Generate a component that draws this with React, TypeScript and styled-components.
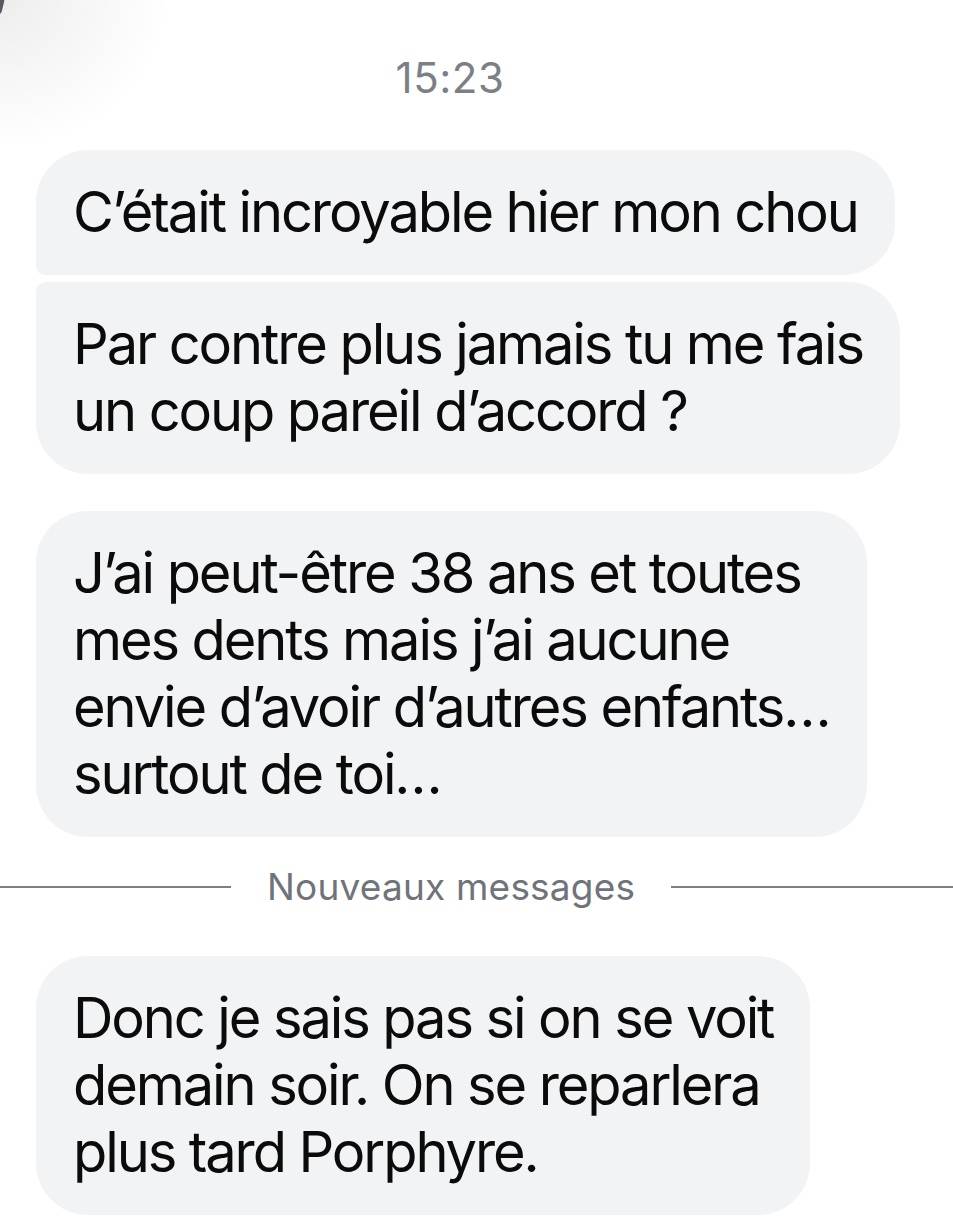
import { styled, createGlobalStyle } from "styled-components";

const GlobalStyle = createGlobalStyle`
  html, body {
    margin: 0;
    padding: 0;
    background: #ffffff;
  }
  body {
    font-family: Inter, "Noto Sans", "Liberation Sans", sans-serif;
    -webkit-font-smoothing: antialiased;
  }
`;

const Screen = styled.div`
  position: relative;
  width: 953px;
  height: 1224px;
  overflow: hidden;
  background:
    radial-gradient(ellipse 170px 150px at 0 0, rgba(0, 0, 0, 0.07), rgba(0, 0, 0, 0) 100%),
    #ffffff;
  padding-top: 54px;
  box-sizing: border-box;
`;

const CornerMark = styled.div`
  position: absolute;
  top: -2px;
  left: -3px;
  width: 6px;
  height: 16px;
  border-radius: 3px;
  background: #555a60;
  transform: rotate(14deg);
`;

const Timestamp = styled.div`
  text-align: center;
  padding-right: 53px;
  font-size: 42px;
  line-height: 48px;
  letter-spacing: 0.5px;
  color: #7b7f86;
  margin-bottom: 48px;
`;

const Thread = styled.div`
  display: flex;
  flex-direction: column;
  align-items: flex-start;
  padding-left: 36px;
`;

type Corner = "top" | "bottom" | "none";

const Bubble = styled.div<{ $tight: Corner; $gap: number }>`
  background: #f2f3f5;
  color: #0b0b0c;
  font-size: 56px;
  line-height: 67px;
  letter-spacing: -2.1px;
  padding: 29px 37px;
  white-space: nowrap;
  border-radius: 52px;
  border-top-left-radius: ${(p) => (p.$tight === "top" ? "9px" : "52px")};
  border-bottom-left-radius: ${(p) => (p.$tight === "bottom" ? "9px" : "52px")};
  margin-bottom: ${(p) => p.$gap}px;
`;

const Line = styled.span`
  display: block;
`;

const Divider = styled.div`
  display: flex;
  align-items: center;
  gap: 36px;
  margin: 27px 0 46px;
`;

const Rule = styled.div<{ $width?: number }>`
  flex: ${(p) => (p.$width ? `0 0 ${p.$width}px` : "1")};
  height: 2px;
  background: #7b7f86;
`;

const DividerLabel = styled.span`
  font-size: 37px;
  line-height: 46px;
  letter-spacing: 0.2px;
  color: #6f737a;
`;

const messages: { lines: string[]; tight: Corner; gap: number }[] = [
  { lines: ["C’était incroyable hier mon chou"], tight: "bottom", gap: 7 },
  {
    lines: ["Par contre plus jamais tu me fais", "un coup pareil d’accord ?"],
    tight: "top",
    gap: 37,
  },
  {
    lines: [
      "J’ai peut-être 38 ans et toutes",
      "mes dents mais j’ai aucune",
      "envie d’avoir d’autres enfants…",
      "surtout de toi…",
    ],
    tight: "none",
    gap: 0,
  },
];

const App = () => {
  return (
    <>
      <GlobalStyle />
      <Screen>
        <CornerMark />
        <Timestamp>15:23</Timestamp>
        <Thread>
          {messages.map((m, i) => (
            <Bubble key={i} $tight={m.tight} $gap={m.gap}>
              {m.lines.map((l) => (
                <Line key={l}>{l}</Line>
              ))}
            </Bubble>
          ))}
        </Thread>
        <Divider>
          <Rule $width={231} />
          <DividerLabel>Nouveaux messages</DividerLabel>
          <Rule />
        </Divider>
        <Thread>
          <Bubble $tight="none" $gap={0}>
            <Line>Donc je sais pas si on se voit</Line>
            <Line>demain soir. On se reparlera</Line>
            <Line>plus tard Porphyre.</Line>
          </Bubble>
        </Thread>
      </Screen>
    </>
  );
};

export default App;
